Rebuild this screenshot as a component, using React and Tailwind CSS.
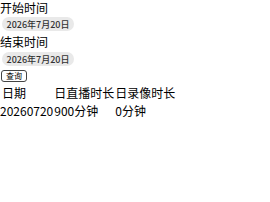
import React from 'react'

const font = { fontFamily: '"Noto Sans CJK SC", "Noto Sans", sans-serif' }

function DatePill({ value }) {
  return (
    <div className="mt-[2px] ml-[2px] flex h-[14px] w-[72px] items-center justify-center rounded-full bg-[#e9e9e9] text-[9px] font-medium leading-none text-[#333]">
      {value}
    </div>
  )
}

export default function App() {
  const rows = [{ date: '20260720', live: '900分钟', rec: '0分钟' }]
  return (
    <div className="w-[270px] h-[202px] bg-white text-black" style={font}>
      <div className="text-[12px] leading-[15px]">开始时间</div>
      <DatePill value="2026年7月20日" />
      <div className="mt-[2px] text-[12px] leading-[17px]">结束时间</div>
      <DatePill value="2026年7月20日" />
      <div className="mt-[4px]">
        <button className="ml-[1px] flex h-[12px] w-[26px] items-center justify-center rounded-[3px] border border-[#444] text-[8px] leading-none">
          查询
        </button>
      </div>
      <table className="mt-[2px] text-[12px] leading-[18px] border-separate border-spacing-0">
        <thead>
          <tr>
            <th className="text-left font-normal pl-[2px]">日期</th>
            <th className="text-left font-normal pl-[1px]">日直播时长</th>
            <th className="text-left font-normal pl-[1px]">日录像时长</th>
          </tr>
        </thead>
        <tbody>
          {rows.map((r) => (
            <tr key={r.date}>
              <td>{r.date}</td>
              <td className="pl-[1px]">{r.live}</td>
              <td className="pl-[1px]">{r.rec}</td>
            </tr>
          ))}
        </tbody>
      </table>
    </div>
  )
}
